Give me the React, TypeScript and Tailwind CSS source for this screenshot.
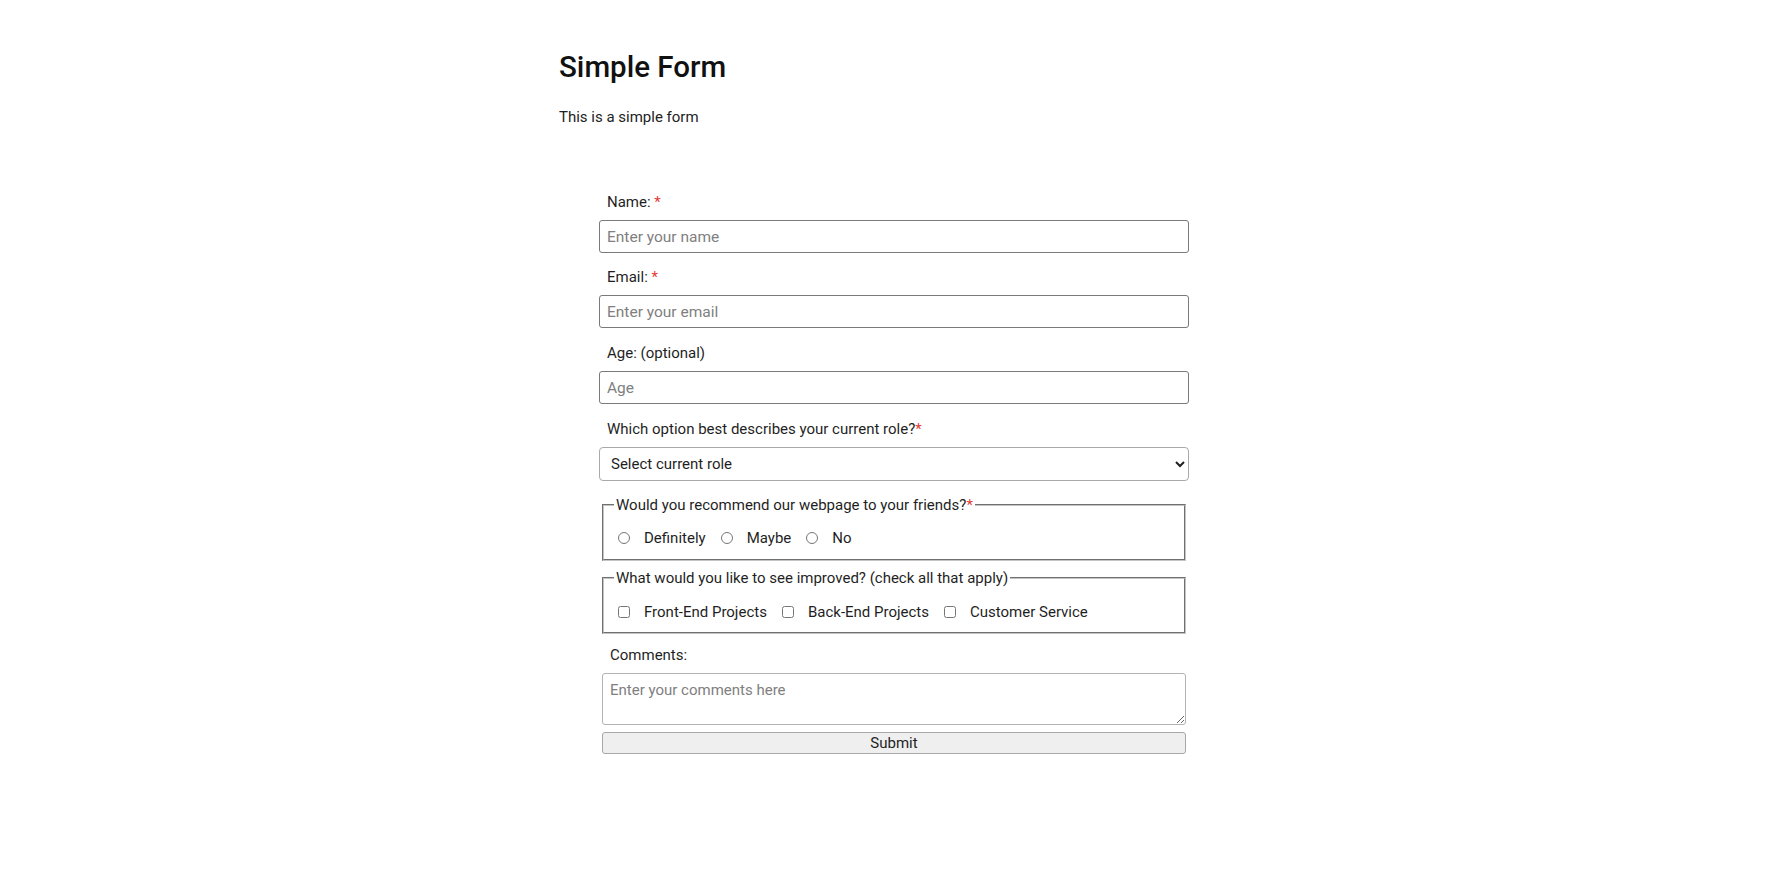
import React from "react";

export default function App() {
  return (
    <div className="min-h-screen bg-white font-['Roboto',sans-serif] text-[15px] text-[#1f1f1f]">
      <div className="mx-auto w-[670px] pt-[50px]">
        <h1 className="text-[29.5px] leading-[35px] font-medium text-[#111]">Simple Form</h1>
        <p className="mt-[23px] text-[15px] leading-[18px] text-[#222]">This is a simple form</p>

        <form className="mx-auto mt-[67px] flex w-[590px] flex-col" onSubmit={(e) => e.preventDefault()}>
          <label htmlFor="name" className="ml-[8px] block h-[18px] leading-[18px]">
            Name: <span className="text-[#e53935]">*</span>
          </label>
          <input
            id="name"
            type="text"
            placeholder="Enter your name"
            className="mt-[9px] h-[33px] w-full rounded-[3px] border border-[#7a7a7a] px-[7px] text-[15.5px] placeholder:text-[#808080] outline-none"
          />

          <label htmlFor="email" className="ml-[8px] mt-[15px] block h-[18px] leading-[18px]">
            Email: <span className="text-[#e53935]">*</span>
          </label>
          <input
            id="email"
            type="email"
            placeholder="Enter your email"
            className="mt-[9px] h-[33px] w-full rounded-[3px] border border-[#7a7a7a] px-[7px] text-[15.5px] placeholder:text-[#808080] outline-none"
          />

          <label htmlFor="age" className="ml-[8px] mt-[16px] block h-[18px] leading-[18px]">
            Age: (optional)
          </label>
          <input
            id="age"
            type="number"
            placeholder="Age"
            className="mt-[9px] h-[33px] w-full rounded-[3px] border border-[#7a7a7a] px-[7px] text-[15.5px] placeholder:text-[#808080] outline-none"
          />

          <label htmlFor="role" className="ml-[8px] mt-[16px] block h-[18px] leading-[18px]">
            Which option best describes your current role?<span className="text-[#e53935]">*</span>
          </label>
          <select
            id="role"
            defaultValue=""
            className="mt-[9px] h-[34px] w-full rounded-[4px] border border-[#a9a9a9] bg-white pl-[7px] pr-[4px] text-[15px] text-[#1f1f1f] outline-none"
          >
            <option value="" disabled>
              Select current role
            </option>
            <option value="student">Student</option>
            <option value="full-time">Full Time Job</option>
            <option value="learner">Full Time Learner</option>
            <option value="other">Other</option>
          </select>

          <fieldset className="ml-[3px] mt-[15px] w-[584px] border-2 border-[#c4c4c4] [border-style:groove] px-[10px] pb-[11px]">
            <legend className="px-[2px] leading-[18px]">
              Would you recommend our webpage to your friends?<span className="text-[#e53935]">*</span>
            </legend>
            <div className="ml-[4px] mt-[14px] flex h-[20px] items-center">
              <input type="radio" name="rec" id="r1" className="h-[12px] w-[12px]" />
              <label htmlFor="r1" className="ml-[14px] mr-[15px]">Definitely</label>
              <input type="radio" name="rec" id="r2" className="h-[12px] w-[12px]" />
              <label htmlFor="r2" className="ml-[14px] mr-[15px]">Maybe</label>
              <input type="radio" name="rec" id="r3" className="h-[12px] w-[12px]" />
              <label htmlFor="r3" className="ml-[14px]">No</label>
            </div>
          </fieldset>

          <fieldset className="ml-[3px] mt-[8px] w-[584px] border-2 border-[#c4c4c4] [border-style:groove] px-[10px] pb-[10px]">
            <legend className="px-[2px] leading-[18px]">What would you like to see improved? (check all that apply)</legend>
            <div className="ml-[4px] mt-[15px] flex h-[20px] items-center">
              <input type="checkbox" id="c1" className="h-[12px] w-[12px]" />
              <label htmlFor="c1" className="ml-[14px] mr-[15px]">Front-End Projects</label>
              <input type="checkbox" id="c2" className="h-[12px] w-[12px]" />
              <label htmlFor="c2" className="ml-[14px] mr-[15px]">Back-End Projects</label>
              <input type="checkbox" id="c3" className="h-[12px] w-[12px]" />
              <label htmlFor="c3" className="ml-[14px]">Customer Service</label>
            </div>
          </fieldset>

          <label htmlFor="comments" className="ml-[11px] mt-[12px] block h-[18px] leading-[18px]">
            Comments:
          </label>
          <textarea
            id="comments"
            placeholder="Enter your comments here"
            className="ml-[3px] mt-[9px] h-[52px] w-[584px] rounded-[3px] border border-[#b3b3b3] px-[7px] pt-[7px] pb-[4px] text-[15px] leading-[18px] placeholder:text-[#808080] outline-none"
          />
          <button
            type="submit"
            className="ml-[3px] mt-[7px] h-[22px] w-[584px] rounded-[3px] border border-[#a8a8a8] bg-[#efefef] text-[15px] leading-[20px] text-[#1f1f1f]"
          >
            Submit
          </button>
        </form>
      </div>
    </div>
  );
}
